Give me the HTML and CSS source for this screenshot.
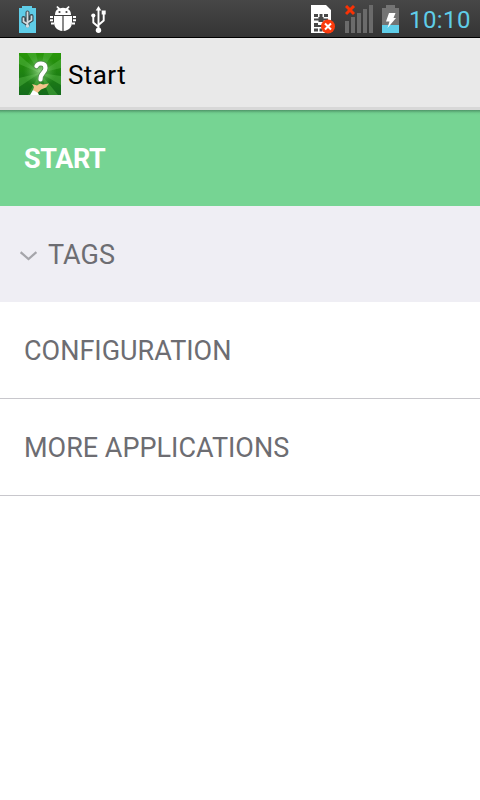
FILE: index.html
```
<!DOCTYPE html>
<html lang="en">
<head>
    <meta charset="UTF-8">
    <meta name="viewport" content="width=device-width, initial-scale=1.0">
    <title>Start</title>
    <link rel="stylesheet" href="styles.css">
</head>
<body>

    <!-- Status bar -->
    <div class="status-bar">
        <div class="status-left">
            <svg class="icon-usb-battery" width="17" height="27" viewBox="0 0 17 27">
                <path d="M3 0h10v2h4v25H0V2h3z" fill="#5fcde8"/>
                <g stroke="#34464e" stroke-width="4" fill="none" stroke-linecap="round">
                    <path d="M8.500 6.500v13M8.500 18L4.500 15.500v-3.500M8.500 16.500l4-2.500v-4"/>
                </g>
                <g stroke="#d3dbde" stroke-width="1.800" fill="none">
                    <path d="M8.500 5.500v15M8.500 18L4.500 15.500v-4M8.500 16.500l4-2.500V9.500"/>
                </g>
                <circle cx="8.500" cy="20" r="1.700" fill="#d3dbde"/>
            </svg>
            <svg class="icon-debug" width="26" height="26" viewBox="0 0 26 26">
                <g fill="#fff">
                    <path d="M5 9C5 6 6 4 8 3L6.300 1 7.500 0 10 2.200Q13 1.400 16 2.200L18.500 0l1.200 1L18 3c2 1 3 3 3 6z"/>
                    <path d="M4 10h8.400v15C7 24.500 4 21 4 16zM13.600 10H22v6c0 5-3 8.500-8.400 9z"/>
                    <path d="M0 10h3v2H0zM0 13.300h3v2H0zM1 16.600h3v2H1zM23 10h3v2h-3zM23 13.300h3v2h-3zM22 16.600h3v2h-3z"/>
                </g>
                <circle cx="9.500" cy="6" r="1.100" fill="#444"/>
                <circle cx="16.500" cy="6" r="1.100" fill="#444"/>
            </svg>
            <svg class="icon-usb" width="15" height="27" viewBox="0 0 15 27">
                <path d="M7.500 3v21M7.500 21L2.300 16.500v-6M7.500 19l5.200-4.500V7" fill="none" stroke="#fff" stroke-width="1.900"/>
                <g fill="#fff">
                    <path d="M7.500 0l2.800 4.500H4.700z"/>
                    <circle cx="2.300" cy="9.500" r="2.100"/>
                    <path d="M10.700 4.500h4v4h-4z"/>
                    <circle cx="7.500" cy="24.200" r="2.700"/>
                </g>
            </svg>
        </div>
        <div class="status-right">
            <svg class="icon-sim" width="25" height="29" viewBox="0 0 25 29">
                <path d="M0 0h15l5 5v23H0z" fill="#fff"/>
                <path d="M3 9h4v3H3zM8.500 9h3v3h-3zM13 9h4v3h-4zM3 13.500h4.500v-1.500h5v1.500H17v2h-4.500V17h-5v-1.500H3zM3 18h4v2h4v2H3zM3 23.500h4v3H3zM8.500 23.500h3v3h-3z" fill="#484848"/>
                <circle cx="17" cy="21.500" r="7" fill="#fa3a0c"/>
                <path d="M14 18.500l6 6M20 18.500l-6 6" stroke="#fff" stroke-width="2"/>
            </svg>
            <svg class="icon-signal" width="28" height="28" viewBox="0 0 28 28">
                <path d="M0 16h4v12H0zM6 12h4v16H6zM12 8h4v20h-4zM18 4h4v24h-4zM24 0h4v28h-4z" fill="#6b6b6b"/>
                <path d="M1 1l8 8M9 1L1 9" stroke="#fa3205" stroke-width="3"/>
            </svg>
            <svg class="icon-battery" width="17" height="28" viewBox="0 0 17 28">
                <path d="M4 0h9v3h4v25H0V3h4z" fill="#747474"/>
                <path d="M0 20h17v8H0z" fill="#5fcde8"/>
                <path d="M7 8h6.500l-2 5H14L5.500 23l2-6.500H4z" fill="#fff"/>
            </svg>
            <span class="clock">10:10</span>
        </div>
    </div>

    <!-- Action bar -->
    <div class="action-bar">
        <svg class="app-icon" width="42" height="42" viewBox="0 0 42 42">
            <defs>
                <linearGradient id="green" x1="0" y1="0" x2="0" y2="1">
                    <stop offset="0" stop-color="#289708"/>
                    <stop offset="1" stop-color="#146b1c"/>
                </linearGradient>
                <radialGradient id="glow">
                    <stop offset="0" stop-color="#b8edac" stop-opacity=".7"/>
                    <stop offset="1" stop-color="#55b546" stop-opacity="0"/>
                </radialGradient>
            </defs>
            <path d="M0 0h42v42H0z" fill="url(#green)"/>
            <path d="M21 20L0 2v9zM21 20L8 0h9zM21 20L25 0h9zM21 20L42 6v9zM21 20l21 3v9zM21 20l18 22h-9zM21 20l-2 22H9zM21 20L0 34v-9z" fill="#57b744" opacity=".45"/>
            <circle cx="21" cy="18" r="17" fill="url(#glow)"/>
            <path d="M17.500 13q1-2.500 4.500-2.500 4.500 0 4.500 4.500 0 2.500-2.500 5-2.500 2.500-2.500 6.500" fill="none" stroke="#548c50" stroke-width="5.600" stroke-linecap="round"/>
            <path d="M17.500 13q1-2.500 4.500-2.500 4.500 0 4.500 4.500 0 2.500-2.500 5-2.500 2.500-2.500 6.500" fill="none" stroke="#fff" stroke-width="4.200" stroke-linecap="round"/>
            <path d="M13 31l5 1.500 3-2 3 1 6-1-3 4-5 2-4 4-4-3.500 1-3z" fill="#f3c48c"/>
            <path d="M11 42l3-5 5 3 1 2z" fill="#fff"/>
        </svg>
        <span class="title">Start</span>
    </div>

    <!-- Menu -->
    <div class="menu">
        <div class="item start"><span class="text-start">START</span></div>
        <div class="item tags">
            <svg class="chevron" width="18" height="10" viewBox="0 0 18 10">
                <path d="M.6 1.200l7.900 6.800 7.900-6.800" fill="none" stroke="#a5a5aa" stroke-width="2.200"/>
            </svg>
            <span class="text-tags">TAGS</span>
        </div>
        <div class="item row"><span>CONFIGURATION</span></div>
        <div class="item row"><span>MORE APPLICATIONS</span></div>
    </div>

</body>
</html>
```
FILE: styles.css
```
body {
    margin: 0;
    background-color: #fff;
    font-family: Roboto, sans-serif;
}
svg {
    display: block;
    flex: none;
}
.status-bar {
    display: flex;
    justify-content: space-between;
    box-sizing: border-box;
    height: 38px;
    padding: 5px 9px 0 19px;
    background: linear-gradient(#474747, #343434);
    border-bottom: 1px solid #000;
}
.status-left, .status-right {
    display: flex;
    align-items: flex-start;
}
.icon-usb-battery, .icon-usb {
    margin-top: 1px;
}
.icon-debug {
    margin: 1px 15px 0 14px;
}
.icon-signal {
    margin: 0 9px;
}
.clock {
    width: 62px;
    margin-left: 10px;
    color: #5fcde8;
    font-size: 24px;
    line-height: 30px;
    letter-spacing: 0.4px;
    white-space: nowrap;
}
.action-bar {
    display: flex;
    align-items: center;
    box-sizing: border-box;
    height: 72px;
    padding-left: 19px;
    background-color: #e9e9e9;
    border-bottom: 3px solid #d8d8d8;
}
.app-icon {
    margin-top: 3px;
}
.title {
    margin: 5px 0 0 7px;
    color: #000;
    font-size: 26px;
    letter-spacing: 0.4px;
}
.item {
    display: flex;
    align-items: center;
    box-sizing: border-box;
    height: 96px;
    padding: 2px 0 0 24px;
    color: #6d6d72;
    font-size: 27px;
}
.start {
    background: linear-gradient(#4f9568, #70cc8d 3px, #76d493 5px);
    color: #fff;
    font-weight: bold;
}
.text-start {
    letter-spacing: -0.4px;
}
.tags {
    padding-left: 20px;
    background-color: #efeef4;
}
.text-tags {
    margin-left: 10px;
}
.chevron {
    margin-top: 1px;
}
.row {
    height: 97px;
    border-bottom: 1px solid #c8c7cc;
}
```
